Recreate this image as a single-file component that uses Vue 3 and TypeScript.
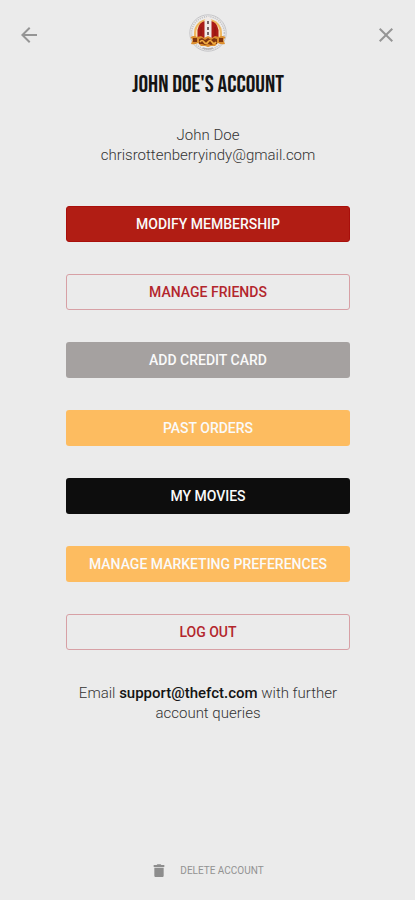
<script setup lang="ts">
type Tone = 'red' | 'outline' | 'grey' | 'amber' | 'black'

interface AccountAction {
  label: string
  tone: Tone
}

const user = { name: 'John Doe', email: 'chrisrottenberryindy@gmail.com' }

const actions: AccountAction[] = [
  { label: 'MODIFY MEMBERSHIP', tone: 'red' },
  { label: 'MANAGE FRIENDS', tone: 'outline' },
  { label: 'ADD CREDIT CARD', tone: 'grey' },
  { label: 'PAST ORDERS', tone: 'amber' },
  { label: 'MY MOVIES', tone: 'black' },
  { label: 'MANAGE MARKETING PREFERENCES', tone: 'amber' },
  { label: 'LOG OUT', tone: 'outline' },
]
</script>

<template>
  <div class="page">
    <header class="topbar">
      <button class="icon-button" type="button" aria-label="Back">
        <svg width="24" height="24" viewBox="0 0 24 24" aria-hidden="true">
          <path d="M20 11H7.83l5.59-5.59L12 4l-8 8 8 8 1.41-1.41L7.83 13H20z" fill="#959595" />
        </svg>
      </button>
      <svg class="logo" width="40" height="40" viewBox="0 0 40 40" aria-hidden="true">
        <circle cx="20" cy="20" r="18.2" fill="#ececec" stroke="#c6c6c9" stroke-width="1" />
        <circle cx="20" cy="20" r="16.4" fill="none" stroke="#c6c4c6" stroke-width="1.6" stroke-dasharray="1.2 1" />
        <path d="M6 28V20A14 14 0 0 1 34 20V28Z" fill="#efb860" />
        <path d="M8 25V20A12 12 0 0 1 32 20V25Z" fill="#f9dfb0" />
        <path d="M9.500 25V17Q11 9 17 8V25Z M30.500 25V17Q29 9 23 8V25Z" fill="#a91b16" />
        <path d="M13 25V14M27 25V14" stroke="#8c1713" stroke-width="1" />
        <path d="M16.500 26V7L20 3L23.500 7V26Z" fill="#f1ebe8" />
        <path d="M19 8H21V11H19ZM19 14H21V17H19ZM19 19H21V22H19Z" fill="#77686b" />
        <path d="M2.500 24Q6 22 9 24L13 23L16 25L20 23L24 25L27 23L31 24Q34 22 37.500 24L35.500 27L37 31Q33 32 30 30L27 33H23L20 34L17 33H13L10 30Q7 32 3 31L4.500 27Z" fill="#dc8f30" />
        <path d="M5 25H9V29H5ZM11 26L14 25L17 27L20 25L23 27L26 25L29 26V31H26L23 32L20 31L17 32L14 31H11ZM31 25H35V29H31Z" fill="#81360f" />
        <path d="M12 29Q14 26 16 29T20 29T24 29T28 29" fill="none" stroke="#f3ae42" stroke-width="1.6" />
        <path d="M15 35Q20 37 25 35" fill="none" stroke="#b5b2b2" stroke-width="1.600" />
      </svg>
      <button class="icon-button" type="button" aria-label="Close">
        <svg width="24" height="24" viewBox="0 0 24 24" aria-hidden="true">
          <path d="M19 6.41 17.59 5 12 10.59 6.41 5 5 6.41 10.59 12 5 17.59 6.41 19 12 13.41 17.59 19 19 17.59 13.41 12z" fill="#959595" />
        </svg>
      </button>
    </header>

    <main class="content">
      <h1 class="title">JOHN DOE'S ACCOUNT</h1>
      <p class="details">
        <span>{{ user.name }}</span>
        <span>{{ user.email }}</span>
      </p>
      <div class="actions">
        <button
          v-for="action in actions"
          :key="action.label"
          type="button"
          class="action"
          :class="action.tone"
        >
          {{ action.label }}
        </button>
      </div>
      <p class="support">
        <span>Email </span>
        <a href="mailto:support@thefct.com">support@thefct.com</a>
        <span> with further </span>
        <span>account queries</span>
      </p>
    </main>

    <footer class="footer">
      <button class="delete" type="button">
        <svg width="16" height="16" viewBox="0 0 24 24" aria-hidden="true">
          <path d="M5 19c0 1.100.9 2 2 2h10c1.100 0 2-.9 2-2V7H5v12zM20 3h-4.500l-1-1h-5l-1 1H4v3h16V3z" fill="#8d8d8d" />
        </svg>
        <span>DELETE ACCOUNT</span>
      </button>
    </footer>
  </div>
</template>

<style>
body {
  background: #ebebeb;
}
</style>

<style scoped>
.page {
  box-sizing: border-box;
  min-height: 100vh;
  display: flex;
  flex-direction: column;
  background: #ebebeb;
  color: #333;
  font-family: Roboto, "Liberation Sans", sans-serif;
}

button {
  margin: 0;
  padding: 0;
  border: 0;
  background: none;
  font-family: inherit;
  cursor: pointer;
}

.topbar {
  display: flex;
  align-items: center;
  justify-content: space-between;
  padding: 13px 17px 0;
}

.icon-button {
  display: flex;
  padding-top: 3px;
}

.logo {
  display: block;
}

.content {
  display: flex;
  flex-direction: column;
  padding: 0 65px 0 66px;
  text-align: center;
}

.title {
  margin: 18px 0 0;
  color: #141414;
  font-family: "Bebas Neue", "Liberation Sans Narrow", "Liberation Sans", sans-serif;
  font-size: 24px;
  font-weight: 400;
  line-height: 28px;
  white-space: nowrap;
}

.details {
  display: flex;
  flex-direction: column;
  margin: 26px 0 0;
  font-size: 15px;
  font-weight: 300;
  line-height: 20px;
}

.actions {
  display: flex;
  flex-direction: column;
  gap: 32px;
  margin-top: 41px;
}

.action {
  height: 36px;
  border: 1px solid transparent;
  border-radius: 3px;
  color: #fafafa;
  font-size: 14px;
  font-weight: 500;
  line-height: 20px;
}

.red {
  border-color: #a90f0b;
  background: #b11d14;
}

.outline {
  border-color: #d7a0a5;
  color: #b3262d;
}

.grey {
  background: #a5a1a0;
}

.amber {
  background: #fdbc60;
}

.black {
  background: #0d0d0d;
}

.support {
  margin: 33px 0 0;
  font-size: 15px;
  font-weight: 300;
  line-height: 20px;
}

.support a {
  color: #141414;
  font-weight: 500;
  text-decoration: none;
}

.footer {
  display: flex;
  justify-content: center;
  margin-top: auto;
  padding: 24px 0 20px;
}

.delete {
  display: flex;
  align-items: center;
  gap: 13px;
  color: #929292;
  font-size: 10px;
  line-height: 18px;
}
</style>
